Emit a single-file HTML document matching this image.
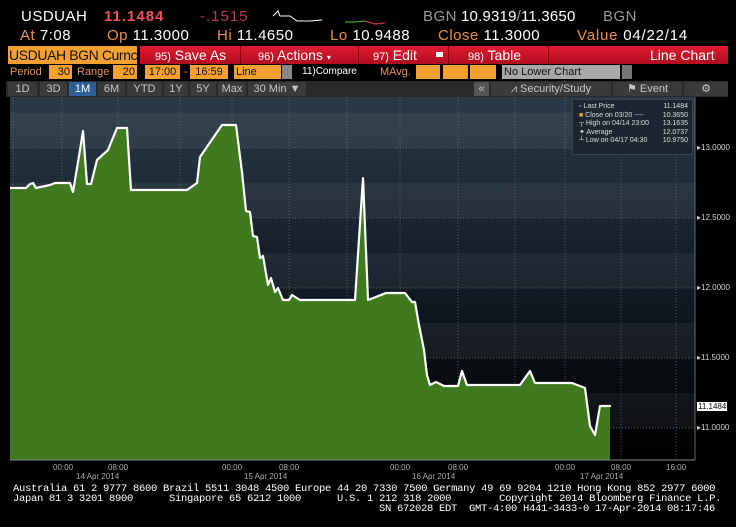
<!DOCTYPE html>
<html><head><meta charset="utf-8"><style>
*{margin:0;padding:0;box-sizing:border-box}
body{width:736px;height:527px;background:#000;position:relative;overflow:hidden;font-family:"Liberation Sans",sans-serif;color:#fff}
.a{position:absolute;white-space:nowrap}
.t1{font-size:15px;top:8px;letter-spacing:0.5px}
.t2{font-size:15px;top:27px;letter-spacing:0.5px}
.o{color:#e8914a}
.g{color:#9a9a9a}
.ob{background:#f5a030;color:#111}
.btn{position:absolute;top:82px;height:14px;background:#3a3a3a;color:#c8c8c8;font-size:11px;text-align:center;line-height:14px}
.sm{font-size:11px;line-height:14px}
.ax{font-size:8px;color:#d0d0d0;position:absolute}
.ft{font-family:"Liberation Mono",monospace;font-size:10.5px;color:#fff;position:absolute;white-space:pre;letter-spacing:-0.3px}
</style></head><body>
<div class="a t1" style="left:21px">USDUAH</div>
<div class="a t1" style="left:104px;color:#f05060;font-weight:bold;letter-spacing:1px">11.1484</div>
<div class="a t1" style="left:200px;color:#b83a48;letter-spacing:1px">-.1515</div>
<svg class="a" style="left:270px;top:8px" width="130" height="20"><polyline points="3,8 8,3 10,8 20,8 27,13 40,13 52,12" fill="none" stroke="#fff" stroke-width="1"/><polyline points="75,14 85,14 95,13" fill="none" stroke="#3a3" stroke-width="1.2"/><polyline points="95,13 105,16 115,15" fill="none" stroke="#c33" stroke-width="1.2"/></svg>
<div class="a t1 g" style="left:423px">BGN</div>
<div class="a t1" style="left:461px;letter-spacing:0.2px">10.9319<span class="g">/</span>11.3650</div>
<div class="a t1 g" style="left:603px">BGN</div>
<div class="a t2" style="left:20px"><span class="o">At</span> 7:08</div>
<div class="a t2" style="left:107px"><span class="o">Op</span> 11.3000</div>
<div class="a t2" style="left:217px"><span class="o">Hi</span> 11.4650</div>
<div class="a t2" style="left:330px"><span class="o">Lo</span> 10.9488</div>
<div class="a t2" style="left:438px"><span class="o">Close</span> 11.3000</div>
<div class="a t2" style="left:577px;letter-spacing:0.8px"><span class="o">Value</span> 04/22/14</div>

<div class="a ob" style="left:8px;top:46px;width:129px;height:18px;font-size:14px;line-height:18px;padding-left:1px;overflow:hidden;letter-spacing:-0.4px">USDUAH BGN Curnc</div>
<div class="a" style="left:140px;top:46px;width:588px;height:18px;background:linear-gradient(#e01c30,#b00c20)"></div>
<div class="a" style="left:240px;top:46px;width:1px;height:18px;background:#800"></div>
<div class="a" style="left:358px;top:46px;width:1px;height:18px;background:#800"></div>
<div class="a" style="left:448px;top:46px;width:1px;height:18px;background:#800"></div>
<div class="a" style="left:548px;top:46px;width:1px;height:18px;background:#800"></div>
<div class="a" style="left:155px;top:46px;font-size:14px;line-height:18px"><span style="font-size:11px">95)</span> Save As</div>
<div class="a" style="left:258px;top:46px;font-size:14px;line-height:18px"><span style="font-size:11px">96)</span> Actions <span style="font-size:8px">▾</span></div>
<div class="a" style="left:373px;top:46px;font-size:14px;line-height:18px"><span style="font-size:11px">97)</span> Edit</div>
<div class="a" style="left:436px;top:52px;width:7px;height:5px;background:#fff"></div>
<div class="a" style="left:468px;top:46px;font-size:14px;line-height:18px"><span style="font-size:11px">98)</span> Table</div>
<div class="a" style="left:650px;top:46px;font-size:14px;line-height:18px">Line Chart</div>

<div class="a sm o" style="left:10px;top:65px">Period</div>
<div class="a sm ob" style="left:49px;top:65px;width:23px;text-align:right;padding-right:2px">30</div>
<div class="a sm o" style="left:77px;top:65px">Range</div>
<div class="a sm ob" style="left:113px;top:65px;width:24px;text-align:right;padding-right:2px">20</div>
<div class="a sm ob" style="left:145px;top:65px;width:35px;text-align:center">17:00</div>
<div class="a sm o" style="left:184px;top:65px">-</div>
<div class="a sm ob" style="left:190px;top:65px;width:38px;text-align:center">16:59</div>
<div class="a sm ob" style="left:234px;top:65px;width:47px;padding-left:2px">Line</div>
<div class="a" style="left:282px;top:65px;width:10px;height:14px;background:#888"></div>
<div class="a sm" style="left:302px;top:65px;font-size:10px">11)Compare</div>
<div class="a sm o" style="left:380px;top:65px">MAvg.</div>
<div class="a ob" style="left:416px;top:65px;width:24px;height:14px"></div>
<div class="a ob" style="left:443px;top:65px;width:25px;height:14px"></div>
<div class="a ob" style="left:470px;top:65px;width:26px;height:14px"></div>
<div class="a sm" style="left:502px;top:65px;width:118px;background:#a8a8a8;color:#111;padding-left:2px">No Lower Chart</div>
<div class="a" style="left:622px;top:65px;width:10px;height:14px;background:#777"></div>

<div class="a" style="left:6px;top:81px;width:722px;height:16px;background:#2a2a2a"></div>
<div class="btn" style="left:8px;width:29px">1D</div>
<div class="btn" style="left:40px;width:27px">3D</div>
<div class="btn" style="left:69px;width:27px;background:#2f5f95;color:#fff">1M</div>
<div class="btn" style="left:98px;width:27px">6M</div>
<div class="btn" style="left:127px;width:35px">YTD</div>
<div class="btn" style="left:164px;width:24px">1Y</div>
<div class="btn" style="left:190px;width:26px">5Y</div>
<div class="btn" style="left:218px;width:28px">Max</div>
<div class="btn" style="left:248px;width:58px">30 Min ▼</div>
<div class="btn" style="left:474px;width:15px;background:#555">«</div>
<div class="btn" style="left:491px;width:120px">⩘ Security/Study</div>
<div class="btn" style="left:613px;width:69px">⚑ Event</div>
<div class="btn" style="left:684px;width:44px">⚙</div>

<svg class="a" style="left:0;top:97px" width="736" height="365">
<defs><linearGradient id="bg" x1="0" y1="0" x2="0" y2="1"><stop offset="0" stop-color="#2a3a48"/><stop offset="0.5" stop-color="#121b26"/><stop offset="1" stop-color="#000"/></linearGradient></defs>
<rect x="10" y="0" width="685" height="363" fill="url(#bg)"/>
<g fill="#fff" opacity="0.05"><rect x="10" y="16" width="685" height="35"/><rect x="10" y="86" width="685" height="35"/><rect x="10" y="156" width="685" height="35"/><rect x="10" y="226" width="685" height="35"/><rect x="10" y="296" width="685" height="35"/></g>
<g stroke="#6a7580" stroke-width="0.7" stroke-dasharray="1,2">
<line x1="10" x2="695" y1="51" y2="51"/><line x1="10" x2="695" y1="121" y2="121"/><line x1="10" x2="695" y1="191" y2="191"/><line x1="10" x2="695" y1="261" y2="261"/><line x1="10" x2="695" y1="331" y2="331"/>
<line x1="13" x2="13" y1="0" y2="363"/><line x1="62" x2="62" y1="0" y2="363"/><line x1="118" x2="118" y1="0" y2="363"/><line x1="180" x2="180" y1="0" y2="363"/><line x1="232" x2="232" y1="0" y2="363"/><line x1="289" x2="289" y1="0" y2="363"/><line x1="347" x2="347" y1="0" y2="363"/><line x1="400" x2="400" y1="0" y2="363"/><line x1="458" x2="458" y1="0" y2="363"/><line x1="515" x2="515" y1="0" y2="363"/><line x1="565" x2="565" y1="0" y2="363"/><line x1="621" x2="621" y1="0" y2="363"/><line x1="676" x2="676" y1="0" y2="363"/>
</g>
<polygon fill="#3f7a1e" points="10,363 10,91 26,91 30,87 33,86 36,91 50,88 55,86 70,86 73,95 80,53 83,34 87,87 91,87 97,63 108,53 117,31 127,31 131,93 187,93 197,86 200,60 222,28 236,28 242,75 246,114 250,115 253,139 257,140 260,161 263,159 268,188 271,181 275,195 278,191 283,203 289,203 292,198 300,203 355,203 363,81 368,203 386,196 405,196 412,205 415,205 419,228 424,253 427,278 430,288 436,285 444,289 458,289 462,274 467,288 520,288 530,274 535,286 572,286 585,291 590,329 595,338 600,309 610,309 610,363"/>
<polyline fill="none" stroke="#fff" stroke-width="2.2" stroke-linejoin="round" points="10,91 26,91 30,87 33,86 36,91 50,88 55,86 70,86 73,95 80,53 83,34 87,87 91,87 97,63 108,53 117,31 127,31 131,93 187,93 197,86 200,60 222,28 236,28 242,75 246,114 250,115 253,139 257,140 260,161 263,159 268,188 271,181 275,195 278,191 283,203 289,203 292,198 300,203 355,203 363,81 368,203 386,196 405,196 412,205 415,205 419,228 424,253 427,278 430,288 436,285 444,289 458,289 462,274 467,288 520,288 530,274 535,286 572,286 585,291 590,329 595,338 600,309 610,309 610,310"/>
<line x1="695" x2="695" y1="0" y2="363" stroke="#666"/>
<line x1="10" x2="695" y1="363" y2="363" stroke="#888"/>
</svg>
<div class="ax" style="left:697px;top:143px">▸13.0000</div>
<div class="ax" style="left:697px;top:213px">▸12.5000</div>
<div class="ax" style="left:697px;top:283px">▸12.0000</div>
<div class="ax" style="left:697px;top:353px">▸11.5000</div>
<div class="ax" style="left:697px;top:423px">▸11.0000</div>
<div class="ax" style="left:697px;top:402px;background:#fff;color:#000;padding:0 1px">11.1484</div>

<div class="a" style="left:572px;top:99px;width:121px;height:56px;background:#1c2630;border:1px solid #3a4550;font-size:7px;line-height:8.5px;color:#ddd;padding:3px 0 0 6px">
<div>▫ Last Price<span style="position:absolute;right:4px">11.1484</span></div>
<div><span style="color:#f5a030">■</span> Close on 03/20 ---- <span style="position:absolute;right:4px">10.3650</span></div>
<div>┬ High on 04/14 23:00 <span style="position:absolute;right:4px">13.1635</span></div>
<div>✦ Average<span style="position:absolute;right:4px">12.0737</span></div>
<div>┴ Low on 04/17 04:30 <span style="position:absolute;right:4px">10.9750</span></div>
</div>

<div class="ax" style="left:53px;top:463px;color:#aaa">00:00</div>
<div class="ax" style="left:108px;top:463px;color:#aaa">08:00</div>
<div class="ax" style="left:76px;top:472px;color:#aaa">14 Apr 2014</div>
<div class="ax" style="left:222px;top:463px;color:#aaa">00:00</div>
<div class="ax" style="left:279px;top:463px;color:#aaa">08:00</div>
<div class="ax" style="left:244px;top:472px;color:#aaa">15 Apr 2014</div>
<div class="ax" style="left:390px;top:463px;color:#aaa">00:00</div>
<div class="ax" style="left:448px;top:463px;color:#aaa">08:00</div>
<div class="ax" style="left:412px;top:472px;color:#aaa">16 Apr 2014</div>
<div class="ax" style="left:555px;top:463px;color:#aaa">00:00</div>
<div class="ax" style="left:611px;top:463px;color:#aaa">08:00</div>
<div class="ax" style="left:666px;top:463px;color:#aaa">16:00</div>
<div class="ax" style="left:580px;top:472px;color:#aaa">17 Apr 2014</div>

<div class="ft" style="left:13px;top:483px">Australia 61 2 9777 8600 Brazil 5511 3048 4500 Europe 44 20 7330 7500 Germany 49 69 9204 1210 Hong Kong 852 2977 6000</div>
<div class="ft" style="left:13px;top:493px">Japan 81 3 3201 8900      Singapore 65 6212 1000      U.S. 1 212 318 2000        Copyright 2014 Bloomberg Finance L.P.</div>
<div class="ft" style="left:379px;top:503px">SN 672028 EDT  GMT-4:00 H441-3433-0 17-Apr-2014 08:17:46</div>
</body></html>
